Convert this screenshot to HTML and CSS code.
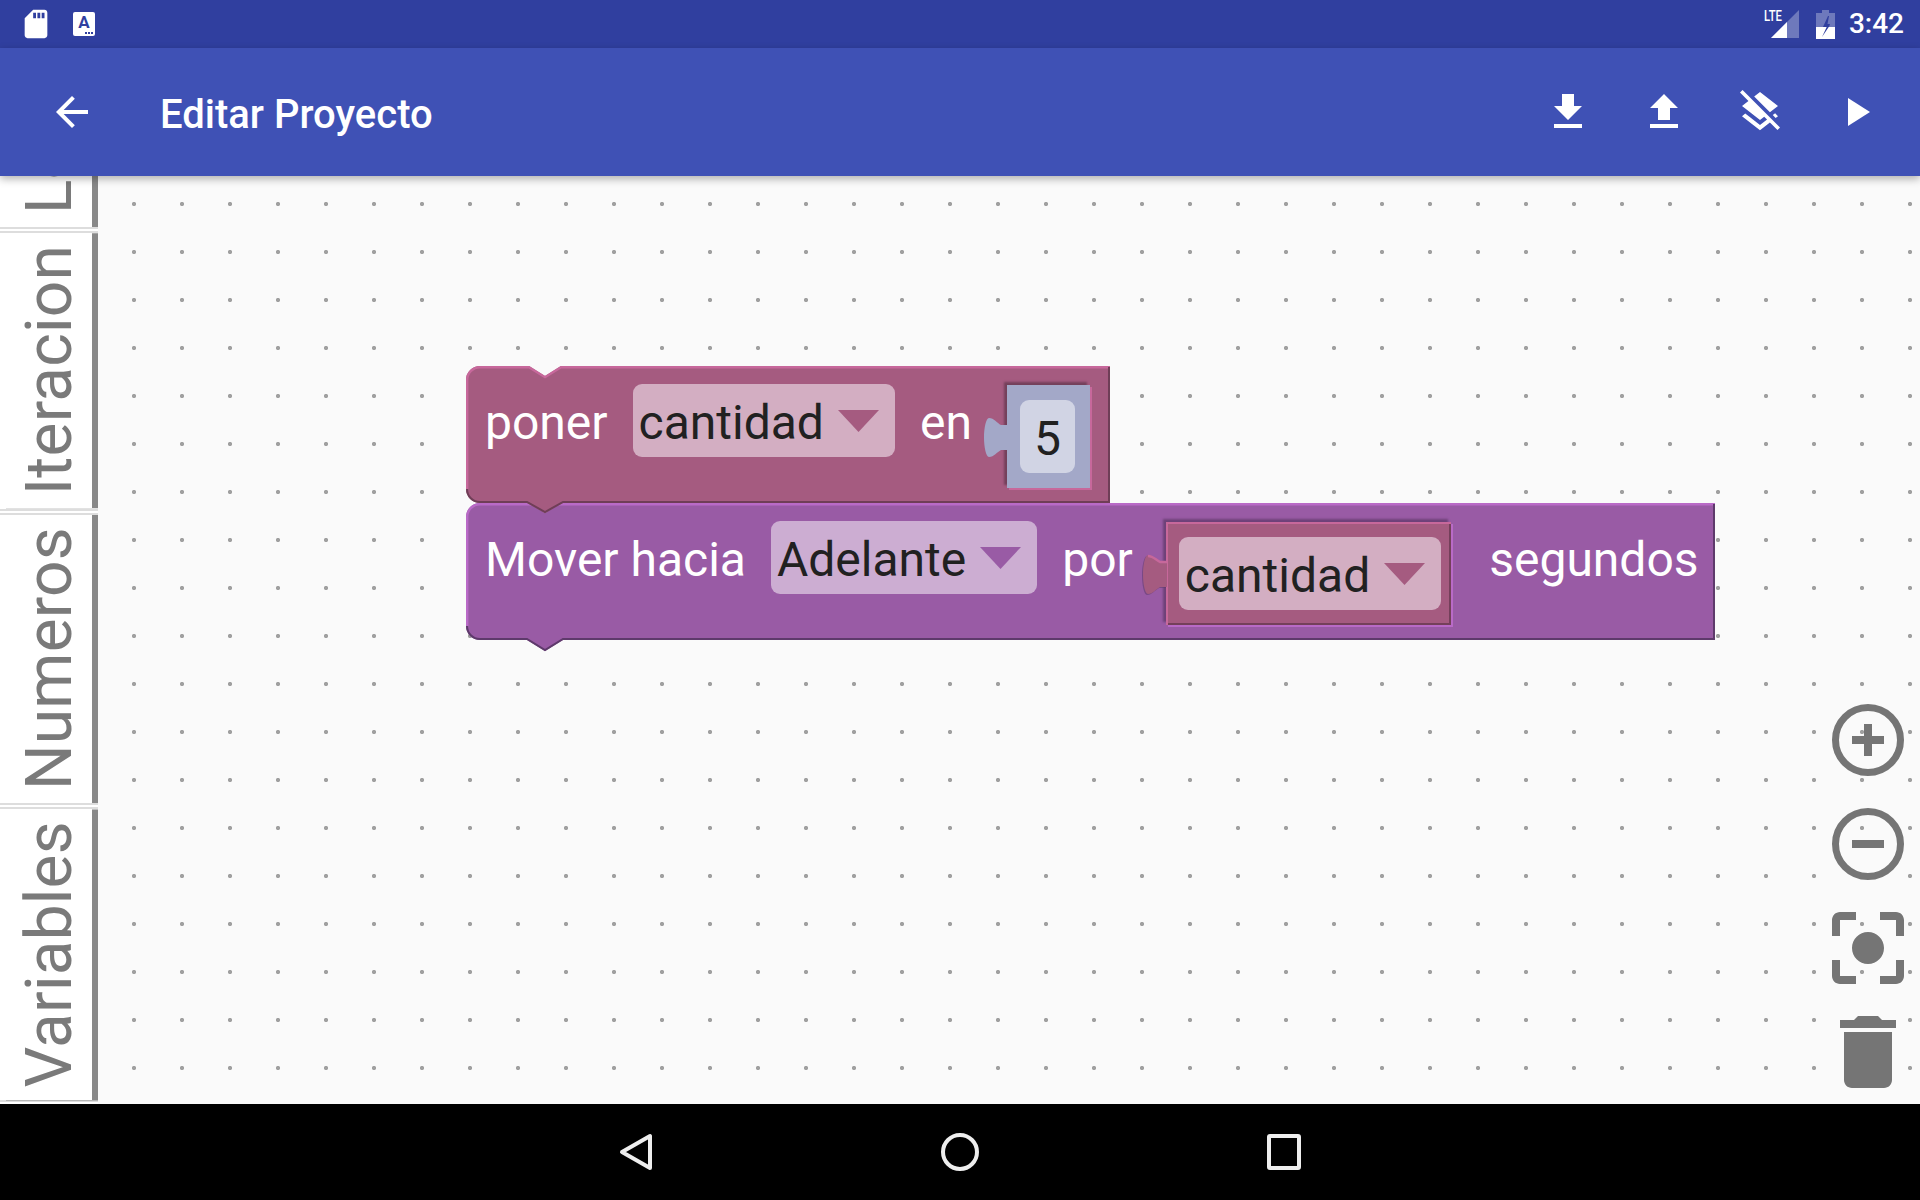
FILE: index.html
```html
<!DOCTYPE html>
<html lang="es">
<head>
<meta charset="utf-8">
<title>Editar Proyecto</title>
<link rel="stylesheet" href="styles.css">
</head>
<body>
<div class="app">
  <div class="statusbar">
    <div class="status-left">
      <svg class="ic-sd" viewBox="0 0 24 24"><path fill="#fff" d="M18 2h-8L4.02 8 4 20c0 1.1.9 2 2 2h12c1.1 0 2-.9 2-2V4c0-1.1-.9-2-2-2zm-6 6h-2V4h2v4zm3 0h-2V4h2v4zm3 0h-2V4h2v4z"/></svg>
      <svg class="ic-a" viewBox="0 0 22 24"><rect width="22" height="24" rx="2" fill="#fff"/><text x="11" y="16" text-anchor="middle" class="ic-a-letter">A</text><rect x="12" y="20" width="2" height="2" fill="#303f9f"/><rect x="15" y="20" width="2" height="2" fill="#303f9f"/><rect x="18" y="20" width="2" height="2" fill="#303f9f"/></svg>
    </div>
    <div class="status-right">
      <svg class="ic-signal" viewBox="0 0 35 30"><path fill="#fff" opacity=".3" d="M35 1V29H7z"/><path fill="#fff" d="M7 29 23 13V29z"/><text x="0" y="12" class="lte" textLength="18" lengthAdjust="spacingAndGlyphs">LTE</text></svg>
      <svg class="ic-battery" viewBox="0 0 19 29"><path fill="#fff" opacity=".3" fill-rule="evenodd" d="M6 0h7v3h6v14H0V3h6zM12 6 7 17H13L14 14H11.5L13 6Z"/><path fill="#fff" d="M0 17H10.7L6 27 12.7 17H19V29H0Z"/></svg>
      <span class="clock">3:42</span>
    </div>
  </div>

  <header class="toolbar">
    <svg class="ic-48" viewBox="0 0 24 24"><path fill="#fff" d="M20 11H7.83l5.59-5.59L12 4l-8 8 8 8 1.41-1.41L7.83 13H20v-2z"/></svg>
    <h1 class="title">Editar Proyecto</h1>
    <div class="actions">
      <svg class="ic-48" viewBox="0 0 24 24"><path fill="#fff" d="M19 9h-4V3H9v6H5l7 7 7-7zM5 18v2h14v-2H5z"/></svg>
      <svg class="ic-48" viewBox="0 0 24 24"><path fill="#fff" d="M9 16h6v-6h4l-7-7-7 7h4v6zm-4 2h14v2H5v-2z"/></svg>
      <svg class="ic-48" viewBox="0 0 24 24"><path fill="#fff" d="M19.81 14.99l1.19-.92-1.43-1.43-1.19.92 1.43 1.43zm-.45-4.72L21 9l-9-7-2.91 2.27 7.87 7.88 2.4-1.88zM3.27 1L2 2.27l4.22 4.22L3 9l1.63 1.27L12 16l2.1-1.63 1.43 1.43L12 18.54l-7.37-5.73L3 14.07l9 7 4.95-3.85L20.73 21 22 19.73 3.27 1z"/></svg>
      <svg class="ic-48" viewBox="0 0 24 24"><path fill="#fff" d="M8 5v14l11-7z"/></svg>
    </div>
  </header>

  <main class="main">
    <nav class="tabs">
      <div class="tab"><span class="tab-label">Logica</span></div>
      <div class="tab"><span class="tab-label">Iteracion</span></div>
      <div class="tab"><span class="tab-label">Numeros</span></div>
      <div class="tab"><span class="tab-label">Variables</span></div>
    </nav>

    <section class="canvas">
      <div class="block block-set">
        <svg class="shape" width="644" height="148" viewBox="0 0 644 148">
          <path class="fill-pink" d="M0 14A14 14 0 0 1 14 0H63L79 10 95 0H644V137H97L79 147 61 137H14A14 14 0 0 1 0 123Z"/>
          <path class="hi-pink" d="M1.2 123V14A12.8 12.8 0 0 1 14 1.2H63L79 11.2 95 1.2H644"/>
          <path class="lo-pink" d="M643 1V136H97L79 146 61 136H14A13 13 0 0 1 1 123"/>
        </svg>
        <span class="label">poner</span>
        <div class="field field-pink"><span>cantidad</span><svg class="caret" viewBox="0 0 41 22"><path class="fill-pink" d="M0 0H41L20.5 22Z"/></svg></div>
        <span class="label">en</span>
        <div class="value value-num socket-pink">
          <svg class="puzzle" viewBox="0 0 24 39"><path fill="#a3a8c8" d="M24 7H17C13 5 10 0 5 0 2 0 0 10 0 19.5S2 39 5 39C10 39 13 34 17 32H24Z"/></svg>
          <div class="field field-num">5</div>
        </div>
      </div>

      <div class="block block-move">
        <svg class="shape" width="1249" height="149" viewBox="0 0 1249 149">
          <path class="fill-purple" d="M0 14A14 14 0 0 1 14 0H63L79 10 95 0H1249V137H97L79 148 61 137H14A14 14 0 0 1 0 123Z"/>
          <path class="hi-purple" d="M1.2 123V14A12.8 12.8 0 0 1 14 1.2H1249"/>
          <path class="lo-purple" d="M1248 1V136H97L79 147 61 136H14A13 13 0 0 1 1 123"/>
        </svg>
        <span class="label">Mover hacia</span>
        <div class="field field-purple"><span>Adelante</span><svg class="caret" viewBox="0 0 41 22"><path class="fill-purple" d="M0 0H41L20.5 22Z"/></svg></div>
        <span class="label">por</span>
        <div class="value value-var socket-purple">
          <svg class="puzzle" viewBox="0 0 24 39"><path fill="#5e3a6b" opacity=".55" transform="translate(-1 1)" d="M24 7H17C13 5 10 0 5 0 2 0 0 10 0 19.5S2 39 5 39C10 39 13 34 17 32H24Z"/><path class="fill-pink" d="M24 7H17C13 5 10 0 5 0 2 0 0 10 0 19.5S2 39 5 39C10 39 13 34 17 32H24Z"/><path class="hi-pink" d="M24 7H17C13 5 10 1 5 1"/></svg>
          <div class="field field-pink"><span>cantidad</span><svg class="caret" viewBox="0 0 41 22"><path class="fill-pink" d="M0 0H41L20.5 22Z"/></svg></div>
        </div>
        <span class="label label-end">segundos</span>
      </div>

      <div class="tools">
        <svg class="ic-96" viewBox="0 0 96 96"><circle class="ring" cx="48" cy="48" r="32.5"/><path class="grey" d="M44 32h8v12h12v8H52v12h-8V52H32v-8h12z"/></svg>
        <svg class="ic-96" viewBox="0 0 96 96"><circle class="ring" cx="48" cy="48" r="32.5"/><path class="grey" d="M32 44h32v8H32z"/></svg>
        <svg class="ic-96" viewBox="0 0 24 24"><path class="grey" d="M12 8c-2.21 0-4 1.79-4 4s1.79 4 4 4 4-1.79 4-4-1.79-4-4-4zm-7 7H3v4c0 1.1.9 2 2 2h4v-2H5v-4zM5 5h4V3H5c-1.1 0-2 .9-2 2v4h2V5zm14-2h-4v2h4v4h2V5c0-1.1-.9-2-2-2zm0 16h-4v2h4c1.1 0 2-.9 2-2v-4h-2v4z"/></svg>
        <svg class="ic-96" viewBox="0 0 24 24"><path class="grey" d="M6 19c0 1.1.9 2 2 2h8c1.1 0 2-.9 2-2V7H6v12zM19 4h-3.5l-1-1h-5l-1 1H5v2h14V4z"/></svg>
      </div>
    </section>
  </main>

  <footer class="navbar">
    <svg class="nav-ic" viewBox="0 0 40 40"><path class="nav-stroke" d="M33 4V36L5 20Z"/></svg>
    <svg class="nav-ic" viewBox="0 0 40 40"><circle class="nav-stroke" cx="20" cy="20" r="17"/></svg>
    <svg class="nav-ic" viewBox="0 0 40 40"><rect class="nav-stroke" x="6" y="4" width="30" height="32" rx="1"/></svg>
  </footer>
</div>
</body>
</html>
```

FILE: styles.css
```css
* { box-sizing: border-box; }

html, body { margin: 0; padding: 0; }

body {
  font-family: Roboto, "Liberation Sans", sans-serif;
  background: #000;
}

.app {
  display: flex;
  flex-direction: column;
  width: 1920px;
  height: 1200px;
  overflow: hidden;
}

/* status bar */
.statusbar {
  flex: none;
  height: 48px;
  background: #303f9f;
  display: flex;
  align-items: center;
  justify-content: space-between;
  color: #fff;
}

.status-left {
  display: flex;
  align-items: center;
  padding-left: 19px;
  gap: 20px;
}

.status-right {
  display: flex;
  align-items: center;
  padding-right: 16px;
}

.ic-sd { width: 34px; height: 34px; }
.ic-a { width: 22px; height: 24px; }
.ic-a-letter { font: 700 17px Roboto, sans-serif; fill: #303f9f; }
.ic-signal { width: 35px; height: 30px; }
.lte { font: 500 15px Roboto, sans-serif; fill: #fff; }
.ic-battery { width: 19px; height: 29px; margin-left: 17px; }

.clock {
  font-size: 28px;
  font-weight: 500;
  line-height: 48px;
  margin-left: 14px;
}

/* toolbar */
.toolbar {
  flex: none;
  height: 128px;
  background: #3f51b5;
  display: flex;
  align-items: center;
  padding: 0 40px 0 48px;
  position: relative;
  z-index: 3;
  box-shadow: 0 3px 8px rgba(0, 0, 0, .3);
}

.ic-48 { width: 48px; height: 48px; display: block; flex: none; }

.title {
  margin: 5px 0 0 64px;
  font-size: 40px;
  font-weight: 500;
  line-height: 48px;
  color: #fff;
}

.actions {
  margin-left: auto;
  display: flex;
  gap: 48px;
}

/* main */
.main {
  flex: 1;
  min-height: 0;
  display: flex;
}

/* tabs */
.tabs {
  flex: none;
  width: 98px;
  background: #fff;
  display: flex;
  flex-direction: column;
  justify-content: flex-end;
  overflow: hidden;
  padding-bottom: 2px;
}

.tab {
  flex: none;
  border-bottom: 6px double #ddd;
  display: flex;
  justify-content: center;
  width: 98px;
}

.tab:last-child { border-bottom: 2px solid #ddd; }

.tab-label {
  width: 92px;
  margin-right: 6px;
  box-shadow: -6px 0 0 #888;
  writing-mode: vertical-rl;
  transform: rotate(180deg);
  font-size: 64px;
  line-height: 84px;
  letter-spacing: .2px;
  color: #7a7a7a;
  padding: 12.5px 8px 12.5px 0;
  text-align: center;
  white-space: nowrap;
}

/* canvas */
.canvas {
  flex: 1;
  position: relative;
  background-color: #fafafa;
  background-image: radial-gradient(circle at 2px 2px, #a0a0a0 1.8px, transparent 2.4px);
  background-size: 48px 48px;
  background-position: 34px 26px;
  overflow: hidden;
}

.block {
  position: absolute;
  display: flex;
  align-items: flex-start;
  padding: 18px 0 0 18px;
  color: #fff;
  font-size: 48px;
  line-height: 73px;
  white-space: nowrap;
}

.block-set { left: 368px; top: 190px; z-index: 2; }
.block-move { left: 368px; top: 327px; z-index: 1; }

.shape { position: absolute; left: 0; top: 0; }

.label { position: relative; padding-top: 2px; }

.block > .label:first-of-type { margin: 0 25px 0 1px; }

.field {
  position: relative;
  display: flex;
  align-items: flex-start;
  height: 73px;
  padding: 2px 16px 0 6px;
  gap: 14px;
  border-radius: 9px;
  color: #212121;
}

.field-pink { background: #d3aec2; }
.field-purple { background: #ccadd2; }

.field-num {
  background: #d1d4e4;
  padding: 2px 14px 0;
}

.caret { width: 41px; height: 22px; margin-top: 24px; flex: none; }

.block > .field { margin-right: 25px; }

.value {
  position: relative;
  margin: 1px 0 0 35px;
  padding: 15px 15px 15px 13px;
  height: 103px;
}

.value-num { background: #a3a8c8; }

.value-var {
  background: #a55b80;
  margin-left: 33px;
  padding: 15px 10px 15px 13px;
  box-shadow: inset 2px 2px 0 #c7689b, inset -2px -2px 0 #74405a, -3px -3px 2px #6e4178, 2px 2px 0 #b96ac7;
}

.socket-pink {
  box-shadow: -3px -3px 2px #74405a, 2px 2px 0 #c7689b;
}

.puzzle {
  position: absolute;
  left: -23px;
  top: 33px;
  width: 24px;
  height: 39px;
  overflow: visible;
}

.label-end { margin-left: 38px; }

.fill-pink { fill: #a55b80; }
.fill-purple { fill: #995ba5; }

.hi-pink, .hi-purple, .lo-pink, .lo-purple { fill: none; }
.hi-pink { stroke: #c7689b; stroke-width: 2.4; }
.hi-purple { stroke: #b96ac7; stroke-width: 2.4; }
.lo-pink { stroke: #6f3e57; stroke-width: 2; }
.lo-purple { stroke: #5e3a6b; stroke-width: 2; }

/* floating tools */
.tools {
  position: absolute;
  right: 4px;
  bottom: 4px;
  display: flex;
  flex-direction: column;
  gap: 8px;
}

.ic-96 { width: 96px; height: 96px; display: block; }
.grey { fill: #757575; }
.ring { fill: none; stroke: #757575; stroke-width: 7; }

/* navigation */
.navbar {
  flex: none;
  height: 96px;
  background: #000;
  position: relative;
  z-index: 4;
  display: flex;
  align-items: center;
  justify-content: center;
  gap: 283px;
}

.nav-ic { width: 40px; height: 40px; display: block; }
.nav-stroke {
  fill: none;
  stroke: #eee;
  stroke-width: 4;
  stroke-linejoin: round;
}
```
